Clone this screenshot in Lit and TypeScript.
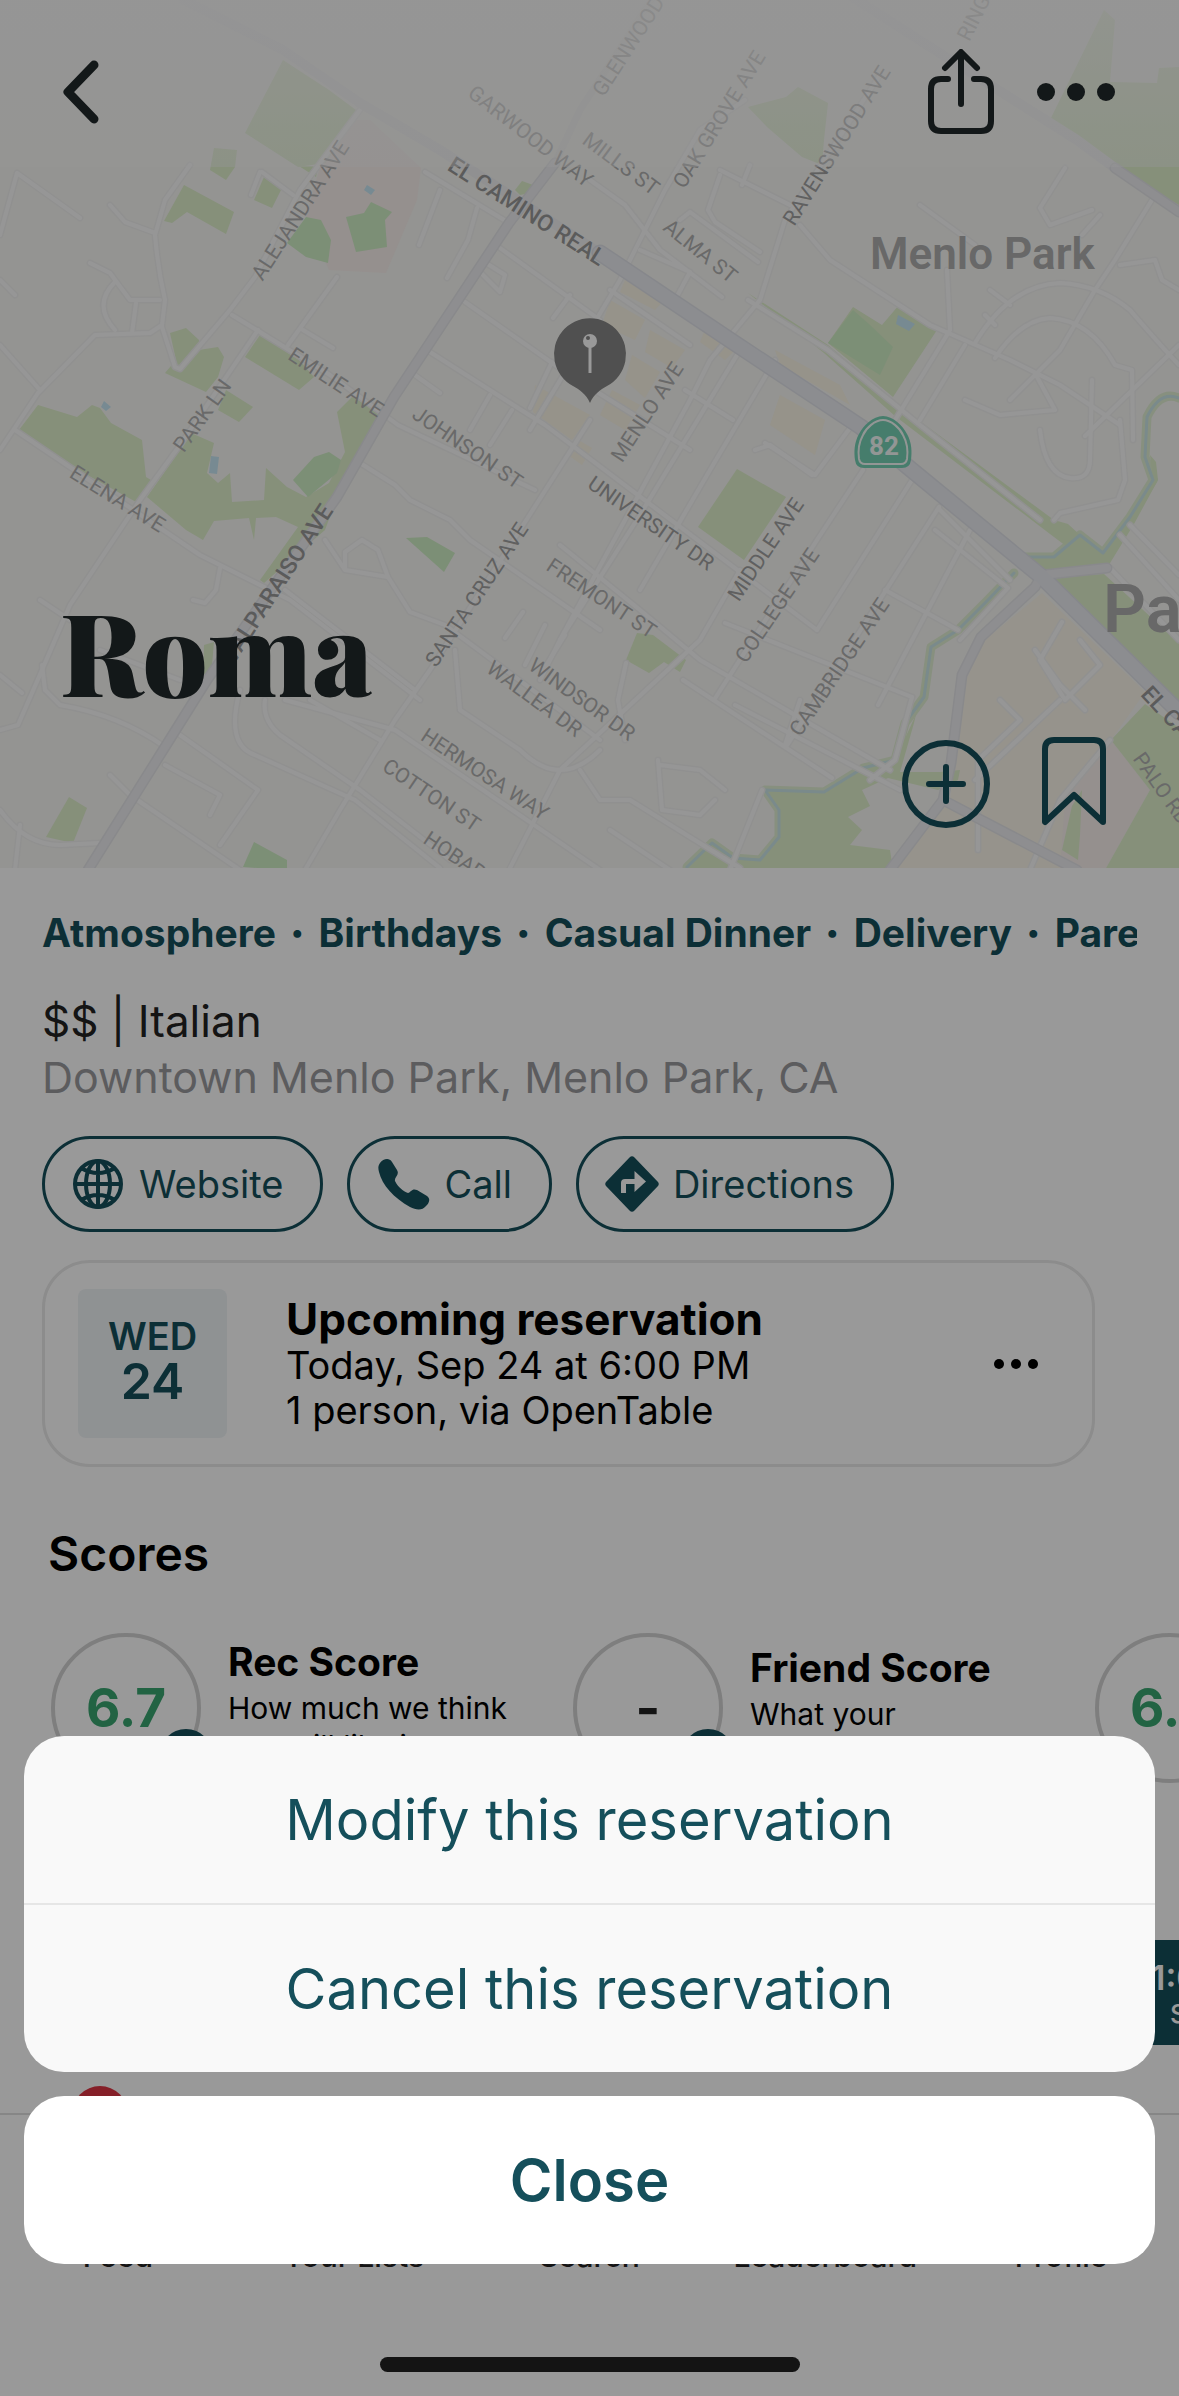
import { LitElement, html, svg, css } from "lit";
import { customElement, property } from "lit/decorators.js";

type MapLabel = [text: string, x1: number, y1: number, x2: number, y2: number, kind?: string];

const PARKS = [
  "283,60 329,90 360,113 325,163 298,167 245,133",
  "214,148 237,150 235,167 226,180 210,170",
  "184,185 234,212 226,234 187,212 172,223 164,221",
  "299,166 318,166 316,177",
  "264,177 282,188 272,208 254,200",
  "186,328 199,340 199,350 218,347 224,357 218,377 206,392 165,373 176,360 170,333",
  "260,335 299,360 314,377 299,390 245,357",
  "226,390 253,407 239,422 218,410",
  "38,405 77,417 92,405 100,408 111,423 142,440 146,477 151,480 138,503 60,460 19,430",
  "191,433 214,443 207,473 218,483 230,473 232,502 264,500 266,468 287,487 306,497 329,483 345,452 337,412 352,397 383,413 364,440 338,495 325,530 264,583 260,580 298,527 276,517 256,518 254,540 249,518 214,521 203,540 186,530 147,497 180,450",
  "69,797 87,808 73,843 46,837",
  "204,645 214,642 212,665 203,680",
  "786,97 798,87 828,103 824,140 822,165 802,157 767,127 748,107",
  "1104,10 1115,20 1110,82 1157,83 1159,68 1179,67 1179,205 1115,168 1050,120",
  "853,307 882,325 899,305 937,330 893,397 828,343",
  "748,293 828,345 905,410 1054,520 1068,524 1080,535 1103,553 1130,517 1153,480 1150,455 1156,462 1158,480 1134,524 1107,568 1046,575 1030,557 1054,555 1066,546 1050,534 895,416 824,353",
  "737,469 786,497 744,560 698,527",
  "637,633 653,635 686,660 680,672 664,662 649,673 626,660",
  "1046,577 1104,574 1179,643 1179,708",
  "1111,740 1145,704 1179,728 1179,870 1105,870 1150,790",
  "765,790 824,792 863,768 895,760 924,697 931,650 914,723 900,772 940,772 960,770 958,780 938,790 888,778 862,790 870,806 848,817 862,830 850,845 890,850 893,870 687,870 712,843 733,858 760,860 779,837 779,810",
  "515,190 522,181 533,185 530,193 520,195",
];
const DEEP_PARKS = [
  "306,217 321,220 331,240 328,263 306,257 287,243",
  "346,217 364,213 371,202 392,212 385,220 387,247 356,252",
  "329,452 341,460 337,473 308,497 293,480 314,457",
  "406,538 427,537 455,553 444,572",
  "254,842 287,860 287,870 243,867",
  "853,310 870,325 893,347 880,375 828,343",
];
const CREEKS = [
  "M1179,398 Q1160,390 1147,417 L1145,457 L1153,480 L1130,517 L1103,553 L1080,535 L1054,557 L1019,557",
  "M1014,573 L985,603 L958,630 L931,647 L924,697 L905,723 L895,760 L863,768 L824,792 L765,790 L779,810 L779,837 L760,860 L733,858 L712,843 L687,867",
];
const STREETS = [
  "M17,173 L80,218 M0,235 L17,173",
  "M190,165 L165,200 L155,235 Q158,270 165,300 L162,325 L150,333 L95,335 L38,393 L0,450",
  "M110,205 L125,222 L155,233",
  "M90,263 L110,273 L130,300 L160,300 M115,282 Q92,305 115,330 M136,303 L132,333",
  "M0,345 L40,390 M0,280 L15,295",
  "M162,327 L175,367 L180,369 L230,310 L255,277 L300,190 L360,110",
  "M232,315 L330,375 L398,425 L535,490",
  "M258,330 L180,445 L140,500 L70,605 L42,670 L18,725 L0,730",
  "M15,430 L200,555 L290,600 L420,700",
  "M337,277 L288,345 M303,330 L333,348",
  "M260,172 L251,195 M262,172 L293,195 M440,190 L419,245 M477,208 L468,240 L447,278 M425,172 L509,223",
  "M500,248 L600,320 M480,272 L500,292 L505,275 L486,263 M465,302 L565,372 L690,450 M430,352 L545,425 L817,630 M412,373 L440,393",
  "M570,295 L553,318 M552,362 L530,408 M490,395 L470,430 M512,410 L490,445",
  "M360,463 L395,485 L410,500 L450,520 L470,540 L600,630",
  "M325,540 L345,570 L388,577 L410,612 L445,625 L600,740",
  "M388,577 L378,550 L362,540 L345,552 L345,568",
  "M590,420 L520,530 L430,670 L395,720 L340,810 L305,870",
  "M455,650 L460,710 L520,750 Q560,790 600,750 M523,612 L505,638 M545,625 L525,665 M565,635 L542,672",
  "M165,747 Q120,715 60,705 L45,690 L42,665",
  "M40,600 L70,620 M220,568 L216,590 L205,603 L193,600 M110,775 L130,795",
  "M180,735 L258,790 L220,845 M165,765 L220,795 L210,815 M130,795 L240,870",
  "M285,590 L415,690 M265,700 Q262,720 280,735 L360,790 L450,860 M310,700 L380,740 M240,690 Q225,745 255,755 L355,800 M355,800 L440,868",
  "M100,650 L180,680 M285,700 L395,730 L600,870",
  "M0,675 L22,693 M0,810 Q25,845 60,845 L100,843 M20,825 L15,870",
  "M745,100 L700,130 L665,190 L620,280 L565,372 L530,430",
  "M880,75 L785,220 L760,300 L710,360 L690,400 L560,640 L540,680",
  "M590,180 L625,205 L660,250 L722,297 M610,290 L690,345 M640,250 L690,272 L675,300",
  "M720,175 L708,210 L715,222 L760,252 M720,170 L790,205 M750,165 L742,185 M680,220 L690,212 L758,262",
  "M800,225 L830,260 L930,325 L1010,360 L1060,385 L1120,425",
  "M748,300 L828,350 L920,425 L1040,520",
  "M975,343 Q1010,285 1060,283 Q1100,285 1130,310 Q1160,345 1179,365",
  "M1155,195 L1115,260 L1095,290 L1060,350 L1010,400 M995,358 Q1020,320 1050,318 Q1090,320 1115,365 L1132,370 L1133,440",
  "M920,205 L975,245 M947,270 L950,330 L892,425 M990,290 L1010,305 M985,315 L995,325 M1085,436 L1179,345",
  "M965,345 L920,420 M1036,375 L1055,410 L1000,415 L965,400",
  "M1120,420 L1125,480 L1118,500 L1060,513 L1054,520 M1040,430 Q1045,475 1070,478 Q1090,480 1090,460 L1092,380",
  "M1092,210 L1050,225 L1040,208 L1065,168 M1120,265 L1155,260 L1162,280 L1179,290 M1100,215 L1082,235",
  "M863,470 L817,540 L714,700 M912,480 L817,630 M939,507 L786,747 M970,530 L878,705 M765,443 L815,475 L850,428",
  "M755,450 L770,445 L812,475 M740,350 L640,515 L560,640 M733,420 L685,390",
  "M775,360 L710,470 L640,590 M740,570 L700,640 L560,770 L510,868",
  "M935,530 L1008,588 L960,640 M885,590 L958,630 M940,510 L1010,580",
  "M725,623 L912,697 M683,680 L832,778 M735,705 L900,790 M560,545 L640,610 L700,660 L890,770",
  "M626,663 L618,700 L625,740 M658,760 L662,810 L700,815 L715,800 M660,765 L700,770 L725,790",
  "M580,770 L600,800 L630,800 L740,868 M610,830 L670,870 M762,790 L730,870 M800,700 L785,745",
  "M912,697 L895,760 L870,780 M1110,740 L1060,800 L1030,870 M1085,710 L1060,685 L1035,650 M1060,700 L975,780",
  "M1062,622 L1040,660 L1065,700 L1100,665 L1080,640 M1000,700 L1020,720 L978,760 L978,850",
  "M1130,525 L1179,575 M1120,535 L1179,600 M1110,568 L1179,640",
];
const FADED = ["M184,0 L283,50 L360,103 L440,150 L595,250", "M851,-4 L924,43 L1077,140 L1115,168"];
const MAJOR = [
  "M600,253 L730,340 L861,427 L908,467 L1042,577 L1179,712",
];
const MEDIUM = [
  "M555,163 L509,223 L394,397 L337,497 L207,680 L165,747 L88,870",
  "M1115,168 L1179,212",
  "M1107,568 L1042,575 L1035,587 L981,637 L962,675 L951,763 L943,800 L890,870 M943,800 L1077,870",
];

const LABELS: MapLabel[] = [
  ["GARWOOD WAY", 470, 88, 592, 183],
  ["EL CAMINO REAL", 450, 162, 604, 260, "strong"],
  ["GLENWOOD AVE", 599, 90, 680, -35],
  ["OAK GROVE AVE", 681, 180, 756, 58],
  ["MILLS ST", 588, 138, 655, 188],
  ["RAVENSWOOD AVE", 788, 222, 884, 68, "mid"],
  ["RINGWOOD", 964, 35, 1010, -55],
  ["ALMA ST", 668, 224, 734, 277],
  ["ALEJANDRA AVE", 258, 274, 341, 146],
  ["EMILIE AVE", 293, 353, 380, 410],
  ["PARK LN", 180, 445, 223, 385],
  ["JOHNSON ST", 417, 412, 519, 482],
  ["ELENA AVE", 73, 470, 163, 526],
  ["VALPARAISO AVE", 226, 662, 328, 505, "strong"],
  ["SANTA CRUZ AVE", 430, 663, 522, 525, "mid"],
  ["MENLO AVE", 616, 458, 677, 365],
  ["UNIVERSITY DR", 590, 480, 713, 565, "mid"],
  ["MIDDLE AVE", 732, 598, 798, 500, "mid"],
  ["COLLEGE AVE", 740, 659, 813, 551],
  ["CAMBRIDGE AVE", 795, 731, 882, 602],
  ["FREMONT ST", 550, 563, 654, 632],
  ["WINDSOR DR", 532, 662, 633, 735],
  ["WALLEA DR", 490, 665, 580, 731],
  ["HERMOSA WAY", 423, 732, 548, 815],
  ["COTTON ST", 384, 762, 480, 827],
  ["HOBART ST", 430, 838, 515, 895],
  ["PALO RD", 1140, 756, 1185, 820],
  ["EL CAMINO", 1148, 692, 1225, 775, "strong"],
];

@customElement("area-map")
export class AreaMap extends LitElement {
  static styles = css`
    :host { display: block; overflow: hidden; background: #f7f7f3; }
    svg { display: block; width: 100%; height: 100%; }
    .park { fill: #dff0cc; }
    .deep { fill: #cfeec5; }
    .campus { fill: #faf5e9; }
    .school { fill: #f8f0ed; }
    .shops { fill: #faf5e6; }
    .pool { fill: #c6e6f3; }
    .line { fill: none; stroke-linejoin: round; stroke-linecap: round; }
    .creek { stroke: #cbe6e8; stroke-width: 3; }
    .bank { stroke: #e2f0d4; stroke-width: 9; }
    .edge { stroke: #f1f1f0; stroke-width: 7; }
    .street { stroke: #fbfbfb; stroke-width: 4; }
    .medium-edge { stroke: #e4e5e8; stroke-width: 11; }
    .medium { stroke: #ededf1; stroke-width: 8; }
    .major-edge { stroke: #e0e2e8; stroke-width: 17; }
    .major { stroke: #e9ebf1; stroke-width: 14; }
    .faded { stroke: #f0f0f2; stroke-width: 10; }
    text { font-family: Roboto, "Liberation Sans", sans-serif; fill: #b0b0b0; font-size: 21px; text-anchor: middle; }
    text.mid { fill: #a0a0a0; }
    text.strong { fill: #989898; font-size: 23px; font-weight: 500; }
    text.town { fill: #adadad; font-size: 44px; font-weight: 600; text-anchor: start; }
    text.city { fill: #adadad; font-size: 67px; font-weight: 600; text-anchor: start; }
    text.route { fill: #f4fbf8; font-size: 26px; font-weight: 700; }
  `;

  private label([text, x1, y1, x2, y2, kind = ""]: MapLabel) {
    const angle = (Math.atan2(y2 - y1, x2 - x1) * 180) / Math.PI;
    const place = `translate(${(x1 + x2) / 2} ${(y1 + y2) / 2}) rotate(${angle})`;
    return svg`<text class=${kind} transform=${place} y="8">${text}</text>`;
  }

  render() {
    return html`
      <svg viewBox="0 0 1179 868" preserveAspectRatio="xMidYMid slice" role="img" aria-label="Map of Menlo Park">
        <defs>
          <linearGradient id="haze" x1="0" y1="0" x2="0" y2="1">
            <stop offset="0" stop-color="#fafafa" stop-opacity="0.75"></stop>
            <stop offset="1" stop-color="#fafafa" stop-opacity="0.4"></stop>
          </linearGradient>
        </defs>
        <polygon class="school" points="333,120 370,120 421,168 417,200 386,273 329,270 306,217"></polygon>
        <polygon class="campus" points="1042,593 985,640 966,680 950,800 890,870 1077,870 1111,740 1145,692"></polygon>
        <polygon class="school" points="1111,740 1150,790 1105,870 1060,870 1065,800"></polygon>
        ${["535,385 590,415 572,440 533,412", "612,390 640,405 625,430 600,415", "632,355 660,372 645,398 625,380", "610,300 645,320 635,340 602,325", "625,280 662,302 655,310 620,292", "650,330 685,350 672,368 645,352", "705,330 735,350 725,360 700,342", "775,350 840,385 850,405 780,365", "780,395 825,420 815,455 770,425", "575,438 592,448 582,465 568,455"].map(
          (p) => svg`<polygon class="shops" points=${p}></polygon>`,
        )}
        ${CREEKS.map((d) => svg`<path class="line bank" d=${d}></path>`)}
        ${PARKS.map((p) => svg`<polygon class="park" points=${p}></polygon>`)}
        ${DEEP_PARKS.map((p) => svg`<polygon class="deep" points=${p}></polygon>`)}
        ${CREEKS.map((d) => svg`<path class="line creek" d=${d}></path>`)}
        <polygon class="park" points="1072,806 1082,790 1080,835 1078,860 1062,850"></polygon>
        <polygon class="pool" points="367,185 375,190 371,195 364,190"></polygon>
        <polygon class="pool" points="104,401 111,407 106,411 101,407"></polygon>
        <polygon class="pool" points="211,456 219,457 217,474 209,473"></polygon>
        <polygon class="pool" points="898,315 915,324 909,331 896,324"></polygon>
        ${STREETS.map((d) => svg`<path class="line edge" d=${d}></path>`)}
        <path class="line edge" d="M690,-60 L580,110 L555,163"></path>
        ${STREETS.map((d) => svg`<path class="line street" d=${d}></path>`)}
        ${FADED.map((d) => svg`<path class="line faded" d=${d}></path>`)}
        ${MEDIUM.map((d) => svg`<path class="line medium-edge" d=${d}></path>`)}
        ${MAJOR.map((d) => svg`<path class="line major-edge" d=${d}></path>`)}
        ${MEDIUM.map((d) => svg`<path class="line medium" d=${d}></path>`)}
        ${MAJOR.map((d) => svg`<path class="line major" d=${d}></path>`)}
        ${LABELS.map((l) => this.label(l))}
        <text class="town" x="870" y="269">Menlo Park</text>
        <text class="city" x="1103" y="632">Palo Alto</text>
        <rect width="1179" height="167" fill="url(#haze)"></rect>
        <path d="M883,416 C893,416 903,426 907,434 C912,443 912,452 911,460 Q910,468 902,468 H864 Q856,468 855,460 C854,452 854,443 859,434 C863,426 873,416 883,416Z" fill="#76d0b4"></path>
        <path d="M883,420 C891,420 900,428 903,435 C908,444 908,452 907,459 Q906,464 901,464 H865 Q860,464 859,459 C858,452 858,444 863,435 C866,428 875,420 883,420Z" fill="none" stroke="#f4fbf8" stroke-width="2"></path>
        <text class="route" x="884" y="455">82</text>
        <path d="M590,403 C586,394 580,390 573,386 A36,36 0 1 1 607,386 C600,390 594,394 590,403Z" fill="#858585"></path>
        <path d="M590,346 V373" stroke="#ffffff" stroke-width="3"></path>
        <circle cx="590" cy="341" r="7" fill="#ffffff"></circle>
        <circle cx="588" cy="338" r="2" fill="#858585"></circle>
      </svg>
    `;
  }
}

interface Score {
  title: string;
  value: string;
  text: string;
  good: boolean;
}

@customElement("score-card")
export class ScoreCard extends LitElement {
  static styles = css`
    :host { display: grid; grid-template-columns: 150px 1fr; column-gap: 27px; align-items: start; width: 495px; flex: none; }
    .ring { position: relative; box-sizing: border-box; width: 150px; height: 150px; border: 4px solid #d2d2d2; border-radius: 50%; display: grid; place-items: center; font-size: 53px; font-weight: 700; color: #222222; }
    .good { color: #39a570; }
    .badge { position: absolute; right: -16px; bottom: -4px; width: 54px; height: 54px; border-radius: 50%; background: #154f5b; }
    .about { padding-top: 12px; }
    .raised { padding-top: 6px; }
    h3 { margin: 0 0 4px; font-size: 39px; line-height: 46px; font-weight: 700; }
    p { margin: 0; font-size: 30px; line-height: 38px; white-space: pre-line; }
  `;
  @property({ attribute: false }) score!: Score;

  render() {
    const { title, value, text, good } = this.score;
    return html`
      <div class="ring ${good ? "good" : ""}">${value}<span class="badge"></span></div>
      <div class="about ${good ? "raised" : ""}"><h3>${title}</h3><p>${text}</p></div>
    `;
  }
}

@customElement("app-root")
export class AppRoot extends LitElement {
  static styles = css`
    :host { display: block; font-family: Inter, "Liberation Sans", sans-serif; color: #000000; }
    button { font: inherit; color: inherit; background: none; border: 0; padding: 0; margin: 0; cursor: pointer; }
    a { color: inherit; text-decoration: none; }
    svg { display: block; }
    h1, h2, p { margin: 0; }
    .page { display: flex; flex-direction: column; min-height: 100vh; background: #ffffff; overflow: hidden; }

    .hero { position: relative; display: flex; flex-direction: column; height: 868px; color: #21282a; }
    .hero area-map { position: absolute; inset: 0; }
    .bar { position: relative; display: flex; align-items: center; gap: 42px; padding: 49px 64px 0 62px; }
    .back { margin-right: auto; }
    .title { position: relative; margin-top: auto; padding: 0 60px; font-family: "Playfair Display", "Liberation Serif", serif; font-size: 114px; line-height: 120px; font-weight: 900; }
    .actions { position: relative; display: flex; justify-content: flex-end; gap: 50px; padding: 26px 72px 38px; color: #154f5b; }

    .info { padding: 40px 42px 0; }
    .tags { display: flex; gap: 14px; overflow: hidden; white-space: nowrap; font-size: 39px; line-height: 50px; font-weight: 700; color: #154f5b; }
    .sep { font-weight: 900; }
    .facts { margin-top: 35px; font-size: 44px; line-height: 56px; color: #222222; }
    .place { font-size: 43px; line-height: 57px; color: #99999d; }
    .links { display: flex; gap: 24px; margin-top: 30px; color: #154f5b; }
    .pill { box-sizing: border-box; display: flex; align-items: center; gap: 14px; height: 96px; padding: 0 37px 0 26px; border: 3px solid #154f5b; border-radius: 48px; font-size: 38px; }
    .booking { box-sizing: border-box; display: flex; align-items: center; margin: 28px 42px 0 0; padding: 26px 54px 26px 33px; border: 3px solid #e9e9e9; border-radius: 48px; }
    .date { display: flex; flex-direction: column; align-items: center; box-sizing: border-box; width: 149px; height: 149px; padding-top: 24px; border-radius: 8px; background: #eff3f6; color: #154f5b; font-weight: 600; font-size: 38px; line-height: 46px; }
    .day { font-size: 50px; line-height: 44px; }
    .detail { flex: 1; margin-left: 59px; font-size: 38px; line-height: 45px; }
    .detail h2 { font-size: 44px; line-height: 48px; font-weight: 700; }

    .scores { padding-top: 60px; }
    .scores h2 { padding: 0 48px; font-size: 48px; line-height: 54px; font-weight: 600; }
    .strip { display: flex; gap: 27px; padding: 52px 0 0 51px; }
    .slots { display: flex; gap: 18px; margin-top: 157px; padding-left: 48px; }
    .slot { box-sizing: border-box; flex: none; width: 335px; height: 105px; background: #154f5b; color: #ffffff; font-size: 34px; line-height: 42px; font-weight: 600; }
    .late { width: 220px; }
    .slot small { display: block; font-size: 26px; line-height: 30px; font-weight: 500; }

    .tabs { position: relative; display: flex; flex-direction: column; justify-content: space-between; box-sizing: border-box; height: 283px; margin-top: auto; border-top: 2px solid #e0e0e0; padding: 24px 0; }
    .tabrow { display: grid; grid-template-columns: repeat(5, 1fr); }
    .tab { position: relative; display: flex; flex-direction: column; align-items: center; gap: 33px; font-size: 30px; line-height: 36px; font-weight: 500; color: #222222; }
    .dot { position: absolute; left: 72px; top: -53px; width: 56px; height: 56px; border-radius: 50%; background: #de3444; }
    .home { align-self: center; width: 420px; height: 15px; border-radius: 8px; background: #222222; }

    .scrim { position: fixed; inset: 0; background: rgba(0, 0, 0, 0.4); }
    .sheet { position: fixed; left: 24px; right: 24px; bottom: 132px; display: flex; flex-direction: column; gap: 24px; color: #154f5b; font-size: 56px; }
    .group { display: flex; flex-direction: column; overflow: hidden; border-radius: 40px; background: #f9f9f9; }
    .choice { height: 167px; }
    .choice + .choice { height: 169px; border-top: 2px solid #e6e6e6; }
    .close { height: 168px; border-radius: 40px; background: #ffffff; font-size: 58px; font-weight: 600; }
  `;

  private tags = ["Atmosphere", "Birthdays", "Casual Dinner", "Delivery", "Parents"];
  private scores: Score[] = [
    { title: "Rec Score", value: "6.7", text: "How much we think\nyou will like it", good: true },
    { title: "Friend Score", value: "-", text: "What your\nfriends think", good: false },
    { title: "Average Score", value: "6.7", text: "What everyone\nthinks", good: true },
  ];
  private tabs = ["Feed", "Your Lists", "Search", "Leaderboard", "Profile"];

  private dots(r: number, step: number) {
    const w = step * 2 + r * 2;
    return html`<svg width=${w} height=${r * 2} viewBox="0 0 ${w} ${r * 2}" fill="currentColor" aria-hidden="true">
      ${[0, 1, 2].map((i) => svg`<circle cx=${r + i * step} cy=${r} r=${r}></circle>`)}
    </svg>`;
  }

  render() {
    return html`
      <div class="page">
        <header class="hero">
          <area-map></area-map>
          <nav class="bar">
            <button class="back" aria-label="Back">
              <svg width="38" height="66" viewBox="0 0 38 66" fill="none" stroke="currentColor" stroke-width="9" stroke-linecap="round" stroke-linejoin="round"><path d="M32,6 L6,33 L32,60"></path></svg>
            </button>
            <button aria-label="Share">
              <svg width="68" height="86" viewBox="0 0 68 86" fill="none" stroke="currentColor" stroke-width="6" stroke-linecap="round" stroke-linejoin="round">
                <path d="M34,55 V4 M18,19 L34,3 L50,19 M21,30 H14 Q4,30 4,40 V72 Q4,82 14,82 H54 Q64,82 64,72 V40 Q64,30 54,30 H47"></path>
              </svg>
            </button>
            <button aria-label="More">${this.dots(9, 30)}</button>
          </nav>
          <h1 class="title">Roma</h1>
          <div class="actions">
            <button aria-label="Add to list">
              <svg width="90" height="94" viewBox="0 0 90 94" fill="none" stroke="currentColor" stroke-width="6" stroke-linecap="round"><circle cx="45" cy="48" r="41"></circle><path d="M45,31 V65 M28,48 H62"></path></svg>
            </button>
            <button aria-label="Bookmark">
              <svg width="66" height="94" viewBox="0 0 66 94" fill="none" stroke="currentColor" stroke-width="6" stroke-linejoin="round"><path d="M4,86 V13 Q4,4 13,4 H53 Q62,4 62,13 V86 L33,59Z"></path></svg>
            </button>
          </div>
        </header>

        <main>
          <section class="info">
            <div class="tags">${this.tags.map((t, i) => html`${i ? html`<span class="sep">·</span>` : ""}<a href="#">${t}</a>`)}</div>
            <p class="facts">$$ | Italian</p>
            <p class="place">Downtown Menlo Park, Menlo Park, CA</p>
            <div class="links">
              <a class="pill" href="#">
                <svg width="54" height="52" viewBox="0 0 54 52" fill="none" stroke="currentColor" stroke-width="4"><circle cx="27" cy="26" r="23"></circle><ellipse cx="27" cy="26" rx="12" ry="23"></ellipse><path d="M27,2 V50 M3,26 H51 M10,10 Q27,20 44,10 M10,42 Q27,32 44,42"></path></svg>
                Website
              </a>
              <a class="pill" href="#">
                <svg width="54" height="52" viewBox="0 0 54 52" fill="currentColor"><path d="M4,5 C7,1 13,-1 16,4 L21,12 C24,17 18,19 19,23 C22,29 27,33 32,35 C35,34 36,30 41,32 L51,38 C55,41 53,45 50,48 C46,53 40,52 34,49 C18,40 6,27 3,14 C2,10 2,8 4,5Z"></path></svg>
                Call
              </a>
              <a class="pill" href="#">
                <svg width="54" height="56" viewBox="0 0 54 56" fill="currentColor"><path fill-rule="evenodd" d="M24.500,1.500 Q27,-1 29.500,1.500 L53,26 Q54.500,28 53,30 L29.500,54.500 Q27,57 24.500,54.500 L1,30 Q-0.500,28 1,26Z M16,37 H21 V28 H29.500 V36 L41,25.500 L29.500,15 V23 H20 Q16,23 16,27Z"></path></svg>
                Directions
              </a>
            </div>
            <article class="booking">
              <div class="date"><span>WED</span><span class="day">24</span></div>
              <div class="detail">
                <h2>Upcoming reservation</h2>
                <p>Today, Sep 24 at 6:00 PM</p>
                <p>1 person, via OpenTable</p>
              </div>
              <button aria-label="Reservation options">${this.dots(5, 17)}</button>
            </article>
          </section>

          <section class="scores">
            <h2>Scores</h2>
            <div class="strip">${this.scores.map((s) => html`<score-card .score=${s}></score-card>`)}</div>
          </section>
          <div class="slots">
            ${["12:00 PM", "12:15 PM", "12:30 PM"].map((t) => html`<button class="slot">${t}<small>Seating</small></button>`)}
            <button class="slot late">1:00 PM<small>Seating</small></button>
          </div>
        </main>

        <footer class="tabs">
          <nav class="tabrow">
            ${this.tabs.map(
              (t, i) => html`<a class="tab" href="#">
                <svg width="66" height="66" viewBox="0 0 66 66" fill="none" stroke="currentColor" stroke-width="5"><rect x="8" y="8" width="50" height="50" rx="10"></rect></svg>
                ${t}${i === 0 ? html`<span class="dot"></span>` : ""}
              </a>`,
            )}
          </nav>
          <div class="home"></div>
        </footer>
      </div>

      <div class="scrim"></div>
      <div class="sheet" role="dialog" aria-label="Reservation options">
        <div class="group">
          <button class="choice">Modify this reservation</button>
          <button class="choice">Cancel this reservation</button>
        </div>
        <button class="close">Close</button>
      </div>
    `;
  }
}
